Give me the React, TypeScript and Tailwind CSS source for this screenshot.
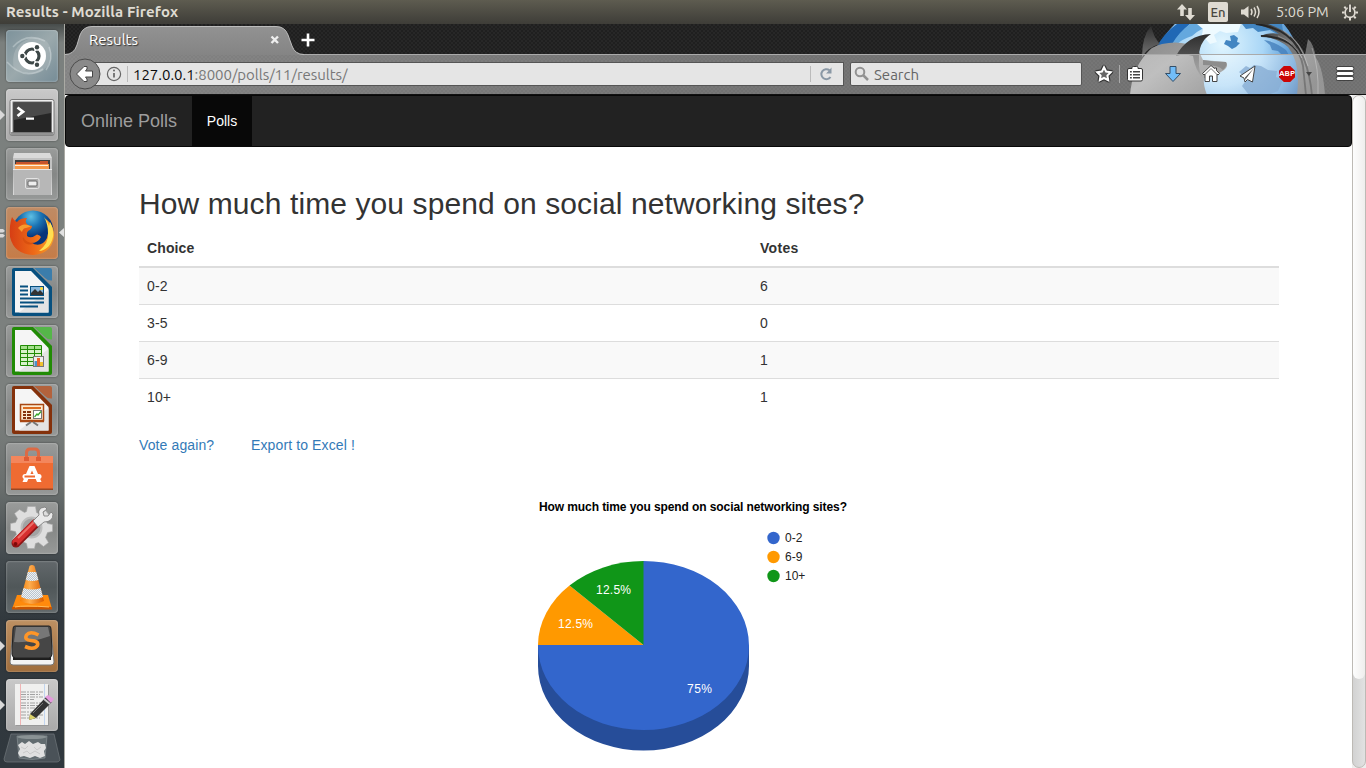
import React from "react";

const UI = "font-['Ubuntu','Noto_Sans',sans-serif]";

const Tile = ({ tone, children, mark, active }: { tone: string; children: React.ReactNode; mark?: "one" | "two"; active?: boolean }) => (
  <div className="flex h-[52px] w-[65px] shrink-0 items-center">
    <svg className="h-[52px] w-[6px] shrink-0" viewBox="0 0 6 52">
      {mark === "one" && <path d="M0 21 L5 26 L0 31Z" fill="#d9d9d9" />}
      {mark === "two" && <path d="M0 22 H3 L5 24 L3 25.500 H0Z M0 27 H3 L5 28.500 L3 30.500 H0Z" fill="#d9d9d9" />}
    </svg>
    <div className={`h-[52px] w-[52px] shrink-0 overflow-hidden rounded-[4px] shadow-[0_0_2px_rgba(0,0,0,0.5),inset_0_0_2px_rgba(255,255,255,0.5)] ${tone}`}>
      <svg className="block h-[52px] w-[52px]" viewBox="0 0 52 52">{children}</svg>
    </div>
    <svg className="h-[52px] w-[7px] shrink-0" viewBox="0 0 7 52">
      {active && <path d="M6.500 20.500 L1 25.500 L6.500 30.500Z" fill="#e2e2e2" />}
    </svg>
  </div>
);

const GREY = "bg-linear-to-b from-[#9a9c9b] via-[#858786] to-[#979998]";
const DARK = "bg-linear-to-b from-[#62686b] via-[#505759] to-[#62696b]";
const LIGHT = "bg-linear-to-b from-[#c9c9c9] to-[#a9a9a9]";

const DocPage = ({ dark, light, children }: { dark: string; light: string; children: React.ReactNode }) => (
  <>
    <path d="M6 4 Q6 2 8 2 H27 L46 21 V48 Q46 50 44 50 H8 Q6 50 6 48Z" fill={dark} />
    <path d="M9 5 H25 L42.500 23 V46.500 H9Z" fill="#f5f5f5" />
    <path d="M13 46.500 L42.500 24 V46.500Z" fill="#e4e4e4" />
    <path d="M28 2 H44 Q46 2 46 4 V14.500 Q42 15 39 12Z" fill={light} />
    {children}
  </>
);

function Launcher() {
  return (
    <aside className="flex h-[744px] w-[65px] shrink-0 flex-col overflow-hidden border-r border-[#aaaaa4] bg-[linear-gradient(#474c4b,#7b807e_2.5%,#7c807e_52%,#6a6f6e_62%,#42494d_72%,#32393e_80%,#30383e)] pt-[6px]">
      <div className="flex flex-col gap-[7px]">
        <Tile tone="bg-linear-to-br from-[#7d929b] via-[#9ba9ac] to-[#768c97]">
          <path d="M8 40 Q3 15 25 8 Q48 6 45 30 Q36 49 17 42" fill="#b9c4c6" opacity=".4" />
          <path d="M1 32 Q18 51 37 39 M7 17 Q20 2 39 11 M43 17 Q48 29 40 40" fill="none" stroke="#d5dddf" strokeOpacity=".45" strokeWidth="1.500" />
          <circle cx="26" cy="26" r="14" fill="#fff" />
          <circle cx="26" cy="26" r="7" fill="none" stroke="#3d4747" strokeWidth="3.200" />
          <path d="M26 26 H13 M26 26 L32.500 14.700 M26 26 L32.500 37.300" stroke="#fff" strokeWidth="1.500" />
          <circle cx="26" cy="26" r="5" fill="#fff" />
          <circle cx="16.500" cy="26" r="3.300" fill="#fff" /><circle cx="31" cy="17.400" r="3.300" fill="#fff" /><circle cx="31" cy="34.600" r="3.300" fill="#fff" />
          <circle cx="16.300" cy="26" r="2.200" fill="#3d4747" /><circle cx="31" cy="17.300" r="2.200" fill="#3d4747" /><circle cx="31" cy="34.700" r="2.200" fill="#3d4747" />
        </Tile>
        <Tile tone={LIGHT} mark="one">
          <rect x="4" y="10.500" width="44" height="36" rx="2" fill="#efefef" stroke="#777" />
          <rect x="4.500" y="43" width="43" height="3.500" fill="#929292" />
          <rect x="7" y="13" width="38.500" height="30.500" fill="#262626" stroke="#777" />
          <path d="M8 14 H45 V24 L8 31Z" fill="#4a4a4a" />
          <path d="M11.500 18.500 L17 22.700 L11.500 27" fill="none" stroke="#fff" strokeWidth="2.800" />
          <path d="M20 29.700 H28" stroke="#fff" strokeWidth="2.200" />
        </Tile>
        <Tile tone={GREY}>
          <path d="M8 5 H44 L46 10 V47 H7 V10Z" fill="#dadada" />
          <path d="M7 10 H46 V24 H7Z" fill="#c2c2c2" />
          <rect x="9" y="12" width="35" height="12" fill="#3d3d3d" />
          <path d="M10 14 H34 V13 H42 V24 H10Z" fill="#c6532b" />
          <path d="M9 16 H43 V24 H9Z" fill="#f59a4b" /><path d="M9 17.500 H42" stroke="#ffeedd" strokeWidth="1.200" />
          <path d="M7 21 H46 L45 47 H8Z" fill="#b7b7b7" /><path d="M7 21.500 H46" stroke="#e8e8e8" />
          <rect x="19.500" y="30.500" width="13.500" height="10" rx="1.500" fill="#aaa" stroke="#e4e4e4" />
          <rect x="22" y="33" width="9" height="5" rx="1" fill="#eee" stroke="#666" />
        </Tile>
        <Tile tone="bg-linear-to-b from-[#bf8b64] to-[#c57c48]" mark="two" active>
          <defs>
            <linearGradient id="fox" x1="0" x2="1"><stop stopColor="#d63e14" /><stop offset=".55" stopColor="#ee6a17" /><stop offset="1" stopColor="#f9a32a" /></linearGradient>
            <radialGradient id="globe" cx=".45" cy=".15"><stop stopColor="#5fc0e4" /><stop offset=".5" stopColor="#1b74b4" /><stop offset="1" stopColor="#07357a" /></radialGradient>
          </defs>
          <circle cx="27" cy="24" r="20.500" fill="url(#globe)" />
          <path d="M6 10 Q8 14 11 15 Q14 11 21 11 Q18 15 22 18 L26 19 Q26 22 22 24 Q20 26 21 29 Q25 32 31 27.500 Q34 28 35 30 Q32 36 25 36 Q36 41 41 31 Q44 22 40 12 Q49 19 48 30 Q45 47 27 48 Q8 47 4 30 Q3 18 6 10Z" fill="url(#fox)" />
          <path d="M38 10 Q42 14 43 19 L44 15 Q51 28 43 39 Q38 44 33 44 Q43 36 42 26 Q42 17 38 10Z" fill="#ffdf51" />
          <path d="M12 21 Q16 16 22 18 L25 19.500 L20 21 Q17 21 16 25Z" fill="#f79a2d" />
          <path d="M17 30 Q20 36 28 36 Q24 39 19 36 Q16 33 17 30Z" fill="#d9500f" />
        </Tile>
        <Tile tone={GREY}>
          <DocPage dark="#07507f" light="#3b7dab">
            <path d="M14 20.500 H22 M14 24.500 H22 M14 28.500 H22 M14 32.500 H38 M14 36.500 H38 M14 40.500 H32" stroke="#07507f" strokeWidth="2" />
            <rect x="24.500" y="20.500" width="13" height="9" fill="#8ab8dc" stroke="#07507f" />
            <path d="M25 29 V27 L29 23 L32 26 L34 24 L37 27 V29Z" fill="#333" /><circle cx="35.500" cy="22.500" r="1.500" fill="#ffdc32" />
          </DocPage>
        </Tile>
        <Tile tone={GREY}>
          <DocPage dark="#218b05" light="#55b649">
            <path d="M14.500 20.500 H35.500 V40.500 H14.500Z" fill="#d8f2ca" stroke="#218b05" />
            <path d="M15 22.500 H35" stroke="#a5df8c" strokeWidth="3" />
            <path d="M14.500 24.500 H35.500 M14.500 28.500 H35.500 M14.500 32.500 H35.500 M14.500 36.500 H35.500 M21.500 20.500 V40.500 M28.500 20.500 V40.500" stroke="#218b05" />
            <rect x="27.500" y="31.500" width="10" height="10" fill="#eee" stroke="#777" />
            <path d="M28.500 41 V36 H31 V41" fill="#4b91ca" /><path d="M31 41 V33 H34 V41" fill="#ed642b" /><path d="M34 41 V37 H37 V41" fill="#efc230" />
          </DocPage>
        </Tile>
        <Tile tone={GREY}>
          <DocPage dark="#84310b" light="#b3623c">
            <rect x="14.500" y="20.500" width="23" height="16" fill="#fce9cf" stroke="#a84713" strokeWidth="1.500" />
            <path d="M17 24 H35" stroke="#db6c21" strokeWidth="2" />
            <path d="M17 28 H25 M17 31 H25 M17 34 H25" stroke="#84310b" strokeWidth="1.800" strokeDasharray="3 1 5 9" />
            <rect x="27.500" y="26.500" width="8" height="8" fill="#fff" stroke="#777" /><path d="M28.500 33 L31 30 L32 31 L35 27.500" fill="none" stroke="#37a72a" strokeWidth="1.200" />
            <path d="M14 37.500 H38" stroke="#a84713" strokeWidth="1.500" /><path d="M25 38 L20 41.500 M27 38 L32 41.500" stroke="#777" strokeWidth="2" />
          </DocPage>
        </Tile>
        <Tile tone={GREY}>
          <path d="M5 13 H47 V46 H5Z" fill="#ef6b32" /><path d="M5 13 H47 V20 H5Z" fill="#f3865c" /><path d="M5 45.500 H47 V47 H5Z" fill="#9a4825" />
          <path d="M20.500 17 V10 Q20.500 6 24 6 H29 Q32.500 6 32.500 10 V17" fill="none" stroke="#dc6a45" strokeWidth="3" />
          <path d="M18 16 H23 M30 16 H35" stroke="#df5b34" strokeWidth="4" />
          <path d="M23.500 23 H28.500 L35.500 39 H31 L26 27.500 L21 39 H16.500Z" fill="#fff" /><rect x="16.500" y="31" width="19" height="5" rx="2.500" fill="#fff" /><path d="M18.500 33.500 H29" stroke="#ef6b32" strokeWidth="2" />
        </Tile>
        <Tile tone={GREY}>
          <g transform="translate(25.5 25.500)">
            <path d="M-4 -21 H4 L5 -15 L9 -13 L14 -17 L18 -12 L14 -7 L16 -4 L21 -3 V4 L16 5 L14 10 L17 15 L12 19 L7 15 L4 16 L3 21 H-4 L-5 16 L-9 14 L-14 18 L-19 12 L-15 7 L-16 4 L-21 3 V-4 L-16 -5 L-14 -9 L-17 -14 L-12 -18 L-7 -15 L-5 -16Z" fill="#dedede" stroke="#aaa" strokeWidth=".600" />
            <circle r="10" fill="#a2a3a3" stroke="#bdbdbd" strokeWidth="2" />
          </g>
          <path d="M10 41 L29 22" stroke="#8e1515" strokeWidth="9" strokeLinecap="round" /><path d="M10 40 L29 21" stroke="#d62e2e" strokeWidth="7" strokeLinecap="round" /><path d="M12 36 L28 20" stroke="#ed6f68" strokeWidth="2" />
          <path d="M27 19 L33 13 Q31 6 39 5 L41 7 L37 10 L38 14 L42 14 L45 10 L47 12 Q47 20 38 20 L32 25Z" fill="#e9e9e9" stroke="#777" strokeWidth=".800" />
          <circle cx="9.500" cy="42" r="2" fill="#7e0808" />
        </Tile>
        <Tile tone={DARK}>
          <defs>
            <linearGradient id="cone"><stop stopColor="#f47e05" /><stop offset=".4" stopColor="#ffad4d" /><stop offset="1" stopColor="#d85c00" /></linearGradient>
            <pattern id="mesh" width="2" height="2" patternUnits="userSpaceOnUse"><path d="M0 0H2V2H0Z" fill="#eef1f4" /><path d="M0 0H1V1H0ZM1 1H2V2H1Z" fill="#b9c4ce" /></pattern>
          </defs>
          <path d="M11 34 H42 L46 48 H6Z" fill="#ff8a0c" /><path d="M6 46 H46 V48.500 H6Z" fill="#c95500" />
          <path d="M23.500 5 Q26 3 28.500 5 L38 40 Q26 46 14 40Z" fill="url(#cone)" />
          <path d="M21.800 11 H30.200 L32.500 19 Q26 21 19.700 19Z M17.500 27 Q26 30 34.700 27 L37 36 Q26 41 15 36Z" fill="url(#mesh)" />
          <path d="M9 46 Q18 44 43 46" fill="none" stroke="#ffbd5b" />
        </Tile>
        <Tile tone="bg-linear-to-b from-[#bd9062] to-[#9f6d3c]" mark="one">
          <path d="M7 10 H45 L48 42 Q48 45 45 45 H7 Q4 45 4 42Z" fill="#f3f3f3" stroke="#777" />
          <path d="M7 35 H45 V40 H7Z" fill="#1d1d1d" />
          <path d="M9 6 H43 Q45 6 45 9 L46 34 Q46 37 43 38 H9 Q6 37 6 34 L7 9 Q7 6 9 6Z" fill="#464646" stroke="#222" />
          <path d="M10 7 H42 L44 16 Q25 23 8 22Z" fill="#8b8b8b" opacity=".7" />
          <path d="M32.500 15 Q24 10.500 20.500 15 Q18 20 25 20.500 Q33 21 31.500 25.500 Q28 30.500 19 26.500" fill="none" stroke="#ff9628" strokeWidth="3.600" />
        </Tile>
        <Tile tone={LIGHT} mark="one">
          <rect x="10" y="6" width="33" height="41" fill="#999" /><rect x="9" y="5" width="33" height="41" fill="#f0f0ef" />
          <path d="M14.500 5 V46" stroke="#f0b4b4" /><path d="M38.500 5 V46" stroke="#c2d5ef" />
          <path d="M15 13 H37 M15 15.500 H34 M15 18 H37 M15 20.500 H28 M15 24 H37 M15 26.500 H32 M15 29 H36 M15 33 H31 M15 36 H37 M15 39 H34" stroke="#999" strokeWidth=".900" strokeDasharray="5 1 2 1" />
          <path d="M24 35 L40 18 L46 23 L30 39 L23 41Z" fill="#343434" /><path d="M24 35 L30 39 L23 41Z" fill="#dbd26b" /><path d="M39 18 L42 16 L48 20 L45 24Z" fill="#e39adc" /><path d="M38 20 L44 25" stroke="#c9c9c9" strokeWidth="2" /><path d="M27 34 L37 24" stroke="#777" />
        </Tile>
      </div>
      <svg className="mt-[2px] h-[36px] w-[64px] shrink-0" viewBox="0 0 64 36">
        <path d="M11 1 H54 L60 27 Q59 29 57 29 H7 Q4 29 4 26Z" fill="#4a5258" stroke="#70777b" strokeWidth=".700" />
        <path d="M17 3 H47 L45 25 Q32 28 19 25Z" fill="#626c70" stroke="#8f979a" strokeWidth=".600" />
        <ellipse cx="32" cy="4" rx="14.500" ry="2" fill="#8a9294" />
        <path d="M18 12 L22 9 L25 11 L29 8 L33 11 L38 9 L41 11 L45 11 L46 15 L44 18 L45 23 L40 25 L35 23 L30 25 L24 23 L20 24 L18 20 L20 16Z" fill="#e0e0e0" />
        <path d="M21 14 L25 16 L28 13 M34 14 L37 17 L41 14 M23 20 L27 18 L30 21 L35 18 L40 21" fill="none" stroke="#c9c9c9" />
      </svg>
    </aside>
  );
}

function Persona() {
  return (
    <svg className="absolute top-0 right-0 h-[71px] w-[250px]" viewBox="1116 24 250 71">
      <defs>
        <radialGradient id="earth" gradientUnits="userSpaceOnUse" cx="1222" cy="44" r="92"><stop stopColor="#e2f6ff" /><stop offset=".45" stopColor="#a9d6f6" /><stop offset=".8" stopColor="#4f92d0" /><stop offset="1" stopColor="#1f5fa6" /></radialGradient>
        <linearGradient id="fur" x2="1" y2=".7"><stop stopColor="#8a8a8a" /><stop offset=".45" stopColor="#9a9a9a" /><stop offset="1" stopColor="#6e6e6e" /></linearGradient>
        <linearGradient id="ear" x2="0" y2="1"><stop stopColor="#2e2e2e" /><stop offset="1" stopColor="#747474" /></linearGradient>
        <linearGradient id="mane" x2="1" y2=".6"><stop stopColor="#262626" /><stop offset=".5" stopColor="#7d7d7d" /><stop offset="1" stopColor="#5a5a5a" /></linearGradient>
      </defs>
      <path d="M1150 95 Q1150 56 1160 44 Q1167 31 1177 22 H1282 Q1304 45 1305 95Z" fill="url(#earth)" />
      <path d="M1177 24 H1190 Q1178 34 1172 46 L1156 48 Q1164 33 1177 24Z" fill="#2068b5" />
      <path d="M1190 24 H1216 Q1200 28 1192 36 Q1182 39 1176 45 L1172 44 Q1179 32 1190 24Z" fill="#64a8de" />
      <path d="M1197 24 L1203 29 L1202 35 L1210 44 L1217 42 L1214 35 L1220 31 L1226 33 L1238 32 L1241 24Z" fill="#eefaff" />
      <path d="M1224 44 L1226 40 L1231 41 L1230 36 L1234 35 L1238 38 L1237 42 L1240 43 L1236 47 L1232 49 L1228 46Z M1242 24 L1246 29 L1253 28 L1258 32 L1270 30 L1284 38 L1282 24Z" fill="#4386c2" />
      <path d="M1264 40 Q1276 42 1286 50 L1289 55 L1282 55 L1278 51 L1272 50 L1270 45Z M1239 72 L1246 66 L1250 68 L1254 65 L1261 66 L1268 70 L1277 71 L1276 77 L1283 80 L1278 91 L1268 95 L1249 95 L1242 86 L1247 79Z" fill="#457fbb" opacity=".8" />
      <path d="M1130 95 Q1132 70 1146 54 Q1152 46 1162 44 Q1176 41 1187 44 L1199 52 L1203 60 L1226 62 Q1229 66 1224 70 Q1216 76 1204 78 Q1203 85 1207 95Z" fill="url(#fur)" />
      <path d="M1142 57 Q1142 36 1151 26 Q1154 38 1160 44 Q1148 47 1142 57Z" fill="url(#ear)" />
      <path d="M1176 56 Q1187 35 1211 34 Q1198 42 1199 60 Q1198 70 1203 78 Q1195 70 1193 56 Q1184 53 1176 56Z" fill="url(#ear)" />
      <path d="M1203 60 Q1214 62 1226 62 Q1228 65 1223 70 Q1219 65 1203 65Z" fill="#4c4c4c" />
      <path d="M1254 24 H1268 Q1296 33 1305 55 L1308 39 Q1314 44 1316 58 Q1323 68 1325 95 H1297 Q1301 63 1288 47 Q1278 38 1260 36 Q1270 32 1279 34 Q1270 27 1254 24Z" fill="url(#mane)" />
      <path d="M1256 24 Q1286 28 1298 48 M1261 36 Q1298 37 1303 66 L1306 95 M1290 37 Q1308 55 1312 95" fill="none" stroke="#202020" strokeWidth="1.800" opacity=".85" />
      <path d="M1278 36 Q1294 42 1302 58 M1284 31 Q1301 42 1308 66 M1312 48 Q1319 68 1318 95" fill="none" stroke="#ababab" opacity=".6" />
    </svg>
  );
}

function Toolbar() {
  return (
    <div className="relative flex h-[40px] items-center border-b border-[#111] bg-linear-to-r from-white/45 via-white/37 to-white/36 pb-[1px]">
      <div className="flex h-[24px] flex-1 items-center pl-[4px]">
        <svg className="relative z-10 h-[32px] w-[32px] shrink-0" viewBox="0 0 32 32">
          <circle cx="16" cy="16" r="15" fill="#8a8a8a" stroke="#4c4c4c" />
          <path d="M7.500 16 L15 8.500 H18 V11 L16.500 13 H23.500 V19 H16.500 L18 21 V23.500 H15Z" fill="#fff" stroke="#454545" />
        </svg>
        <div className="-ml-[9px] flex h-[24px] w-[752px] shrink-0 items-center border border-[#555] bg-[#e5e5e5] pl-[13px]">
          <svg className="h-[16px] w-[16px] shrink-0" viewBox="0 0 16 16"><circle cx="8" cy="8" r="6.600" fill="none" stroke="#666" strokeWidth="1.200" /><path d="M8 7 V11.500" stroke="#666" strokeWidth="1.700" /><circle cx="8" cy="4.600" r="1" fill="#666" /></svg>
          <div className="ml-[5px] h-[16px] w-px bg-[#bbb]" />
          <span className={`ml-[5px] flex-1 pt-[1px] text-[15px] leading-[20px] tracking-[-0.03px] whitespace-nowrap text-[#777] ${UI}`}><span className="text-[#0a0a0a]">127.0.0.1</span>:8000/polls/11/results/</span>
          <div className="h-[16px] w-px bg-[#bbb]" />
          <svg className="mr-[9px] ml-[7px] h-[16px] w-[16px]" viewBox="0 0 16 16"><path d="M12.500 11 A5 5 0 1 1 11.500 4.300" fill="none" stroke="#8a98a5" strokeWidth="2" /><path d="M13.500 1.500 V7.500 H8 L10.500 5Z" fill="#8a98a5" /></svg>
        </div>
        <div className="ml-[6px] flex h-[24px] w-[232px] shrink-0 items-center rounded-[2px] border border-[#555] bg-[#e5e5e5]">
          <svg className="ml-[3px] h-[16px] w-[16px]" viewBox="0 0 16 16"><circle cx="6" cy="6" r="4.300" fill="none" stroke="#929292" strokeWidth="2" /><path d="M9 9 L14 14" stroke="#929292" strokeWidth="2.500" /></svg>
          <span className={`ml-[4px] pt-[1px] text-[15px] leading-[20px] text-[#666] ${UI}`}>Search</span>
        </div>
        <div className="flex flex-1 items-center">
          <svg className="ml-[12px] h-[20px] w-[20px]" viewBox="0 0 20 20"><path d="M10 2.800 L12.200 7.300 L17.200 8 L13.600 11.500 L14.400 16.500 L10 14.200 L5.600 16.500 L6.400 11.500 L2.800 8 L7.800 7.300Z" fill="none" stroke="#333" strokeWidth="4" strokeLinejoin="round" /><path d="M10 3.200 L12.100 7.500 L16.800 8.200 L13.400 11.500 L14.200 16.200 L10 14 L5.800 16.200 L6.600 11.500 L3.200 8.200 L7.900 7.500Z" fill="#666" stroke="#fff" strokeWidth="2" /></svg>
          <div className="ml-[5px] h-[18px] w-px bg-[#aaa]" />
          <svg className="ml-[5px] h-[20px] w-[20px]" viewBox="0 0 20 20"><path d="M7 4.500 V3.500 Q7 2.500 8.500 2.500 H11.500 Q13 2.500 13 3.500 V4.500 H16 Q17.500 4.500 17.500 6 V15.500 Q17.500 17 16 17 H4 Q2.500 17 2.500 15.500 V6 Q2.500 4.500 4 4.500Z" fill="#fff" stroke="#333" /><path d="M5 7 H6.800 V8.500 H5Z M8 7 H15 V8.500 H8Z M5 10 H6.800 V11.500 H5Z M8 10 H15 V11.500 H8Z M5 13 H6.800 V14.500 H5Z M8 13 H15 V14.500 H8Z" fill="#444" /></svg>
          <svg className="ml-[18px] h-[20px] w-[20px]" viewBox="0 0 20 20"><path d="M7 2.500 H13 V9.500 H17.500 L10 17.500 L2.500 9.500 H7Z" fill="#72bdf8" stroke="#344f68" strokeLinejoin="round" /></svg>
          <svg className="ml-[18px] h-[20px] w-[20px]" viewBox="0 0 20 20"><path d="M4 10 V17.500 H8.500 V12 H11.500 V17.500 H16 V10 L17 11 L18.500 9.500 L15.500 6.500 V4 H13.500 V4.500 L10 1.500 L1.500 9.500 L3 11Z" fill="#fff" stroke="#444" /><path d="M4.500 10 L10 4.500 L15.500 10" fill="none" stroke="#777" /></svg>
          <svg className="ml-[17px] h-[20px] w-[20px]" viewBox="0 0 20 20"><path d="M17 2 L2 12 L6 14 L7 18 L9.500 15.500 L14.500 18Z" fill="#fff" stroke="#444" strokeLinejoin="round" /><path d="M16 4 L7 13.500 L7.500 16 L8.500 14Z" fill="#555" /></svg>
          <div className="ml-[21px] flex h-[16px] w-[16px] items-center justify-center bg-[#cb0606] [clip-path:polygon(30%_0,70%_0,100%_30%,100%_70%,70%_100%,30%_100%,0_70%,0_30%)]"><span className="font-['Ubuntu','Liberation_Sans',sans-serif] text-[8px] leading-[16px] font-bold text-white">ABP</span></div>
          <svg className="ml-[10px] h-[6px] w-[8px]" viewBox="0 0 8 6"><path d="M1 1 H7 L4 5Z" fill="#444" /></svg>
          <svg className="ml-[22px] h-[20px] w-[20px]" viewBox="0 0 20 20"><path d="M3 4.500 H17 M3 9.500 H17 M3 14.500 H17" stroke="#333" strokeWidth="4.600" strokeLinecap="round" /><path d="M3 4.500 H17 M3 9.500 H17 M3 14.500 H17" stroke="#fff" strokeWidth="3" strokeLinecap="round" /></svg>
        </div>
      </div>
    </div>
  );
}

const rows = [["0-2", "6"], ["3-5", "0"], ["6-9", "1"], ["10+", "1"]];
const legend = [["0-2", "#3366cc"], ["6-9", "#ff9900"], ["10+", "#109618"]];

function PieChart() {
  return (
    <svg className="ml-[361px] block h-[313px] w-[400px] font-['Liberation_Sans',Arial,sans-serif] text-[12px] tracking-normal" viewBox="500 455 400 313">
      <text x="539" y="511" fontWeight="bold" textLength="308">How much time you spend on social networking sites?</text>
      {legend.map(([label, color], i) => (
        <g key={label}><circle cx="773.500" cy={538 + i * 19} r="6.200" fill={color} /><text x="785" y={542 + i * 19} fill="#222">{label}</text></g>
      ))}
      <path d="M538 645 V666 A105.500 84.500 0 0 0 749 666 V645Z" fill="#264d99" />
      <path d="M643 645 V561 A105.500 84.500 0 1 1 538 645Z" fill="#3366cc" />
      <path d="M643.500 645 H538 A105.500 84.500 0 0 1 569.500 585.500Z" fill="#ff9900" />
      <path d="M643.500 645 L569.500 585.500 A105.500 84.500 0 0 1 643.500 561Z" fill="#109618" />
      <g fill="#fff"><text x="596" y="594" textLength="35">12.5%</text><text x="558" y="628" textLength="35">12.5%</text><text x="687" y="693" textLength="25">75%</text></g>
    </svg>
  );
}

export default function App() {
  return (
    <div className="flex h-[768px] w-[1366px] flex-col overflow-hidden bg-white">
      <header className={`flex h-[24px] shrink-0 items-center bg-linear-to-b from-[#5e5c50] to-[#3e3d38] pl-[6px] text-[#dfdbd2] ${UI}`}>
        <span className="flex-1 text-[15px] leading-[24px] font-bold tracking-[0.12px] whitespace-nowrap">Results - Mozilla Firefox</span>
        <svg className="h-[20px] w-[20px]" viewBox="0 0 20 20"><path d="M6 2 L11 7.500 H7.800 V14 H4.200 V7.500 H1Z M14 18.500 L9 13 H12.200 V6 H15.800 V13 H19Z" fill="#dfdbd2" /></svg>
        <div className="ml-[12px] flex h-[20px] w-[20px] items-center justify-center rounded-[2px] bg-[#dfdbd2] text-[13px] leading-[20px] font-medium text-[#484640]">En</div>
        <svg className="ml-[12px] h-[20px] w-[22px]" viewBox="0 0 22 20"><path d="M1 7.500 H4 L8.500 4 V16 L4 12.500 H1Z" fill="#dfdbd2" /><path d="M11 7 Q13 10 11 13 M14 5.500 Q17 10 14 14.500 M17 4 Q21 10 17 16" fill="none" stroke="#dfdbd2" strokeWidth="1.500" /></svg>
        <span className="ml-[14px] w-[54px] text-[14.500px] leading-[24px] whitespace-nowrap">5:06 PM</span>
        <svg className="mr-[7px] ml-[11px] h-[18px] w-[18px]" viewBox="0 0 18 18">
          <circle cx="9" cy="9.500" r="4.900" fill="none" stroke="#dfdbd2" strokeWidth="1.700" />
          <path d="M9 15 V17.500 M3.500 9.500 H1 M14.500 9.500 H17 M5 13.500 L3.300 15.200 M13 13.500 L14.700 15.200 M5 5.500 L3.300 3.800 M13 5.500 L14.700 3.800" stroke="#dfdbd2" strokeWidth="2" />
          <path d="M9 1 V8" stroke="#4d4b44" strokeWidth="4.500" /><path d="M9 1.500 V9" stroke="#dfdbd2" strokeWidth="1.900" />
        </svg>
      </header>
      <div className="flex h-[744px]">
        <Launcher />
        <main className="flex w-[1301px] flex-col">
          <div className="relative h-[71px] shrink-0 bg-[#232323] bg-[repeating-conic-gradient(#1f1f1f_0_25%,#272727_0_50%)] bg-size-[4px_4px]">
            <Persona />
            <div className={`relative flex h-[31px] border-b border-[#aaa] text-white ${UI}`}>
              <svg className="absolute top-0 left-0 h-[31px] w-[242px]" viewBox="0 0 242 31">
                <defs><linearGradient id="tab" x2="0" y2="1"><stop stopColor="#929292" /><stop offset="1" stopColor="#848484" /></linearGradient></defs>
                <path d="M0 30.500 Q9 30.500 12 21 L15 11 Q18 2 27 2.500 H211 Q220 2 223 11 L227 22 Q230 30.500 239 30.500 V31 H0Z" fill="url(#tab)" />
                <path d="M0 30.500 Q9 30.500 12 21 L15 11 Q18 2.500 27 2.500 H211 Q220 2.500 223 11 L227 22 Q230 30.500 239 30.500" fill="none" stroke="#bcbcbc" />
              </svg>
              <span className="relative ml-[24px] w-[181px] pt-[1px] text-[15px] leading-[29px] [text-shadow:1px_1px_1px_#333]">Results</span>
              <svg className="relative mt-[11px] h-[10px] w-[10px]" viewBox="0 0 10 10"><path d="M1.500 1.500 L8 8 M8 1.500 L1.500 8" stroke="#eee" strokeWidth="2.400" /></svg>
              <svg className="relative mt-[9px] ml-[21px] h-[14px] w-[14px]" viewBox="0 0 14 14"><path d="M7 0.500 V13.500 M0.500 7 H13.500" stroke="#fff" strokeWidth="2.600" /></svg>
            </div>
            <Toolbar />
          </div>
          <div className="flex h-[673px] bg-white font-['Liberation_Sans',Arial,sans-serif] text-[14px] leading-[20px] text-[#333]">
            <div className="w-[1287px] overflow-hidden">
              <nav className="flex h-[52px] rounded-[4px] border border-[#080808] bg-[#222]">
                <a className="w-[126px] pl-[15px] text-[18px] leading-[50px] whitespace-nowrap text-[#9d9d9d]">Online Polls</a>
                <a className="w-[60px] bg-[#080808] text-center leading-[50px] text-white">Polls</a>
              </nav>
              <section className="ml-[74px] w-[1140px] pt-[40px] tracking-[0.12px]">
                <h2 className="mb-[10px] text-[30px] leading-[33px] tracking-[0.1px] whitespace-nowrap">How much time you spend on social networking sites?</h2>
                <div className="flex h-[38px] border-b-2 border-[#ddd] font-bold"><div className="w-[613px] p-[8px]">Choice</div><div className="p-[8px] tracking-[0.3px]">Votes</div></div>
                {rows.map(([choice, votes], i) => (
                  <div key={choice} className={`flex ${i ? "h-[37px] border-t border-[#ddd]" : "h-[36px]"} ${i % 2 ? "" : "bg-[#f9f9f9]"}`}><div className="w-[613px] p-[8px]">{choice}</div><div className="p-[8px]">{votes}</div></div>
                ))}
                <div className="mt-[20px] flex h-[20px] text-[#337ab7]"><a className="w-[112px]">Vote again?</a><a>Export to Excel !</a></div>
                <PieChart />
              </section>
            </div>
            <div className="w-[14px] bg-[#eee]"><div className="h-full rounded-[7px] border border-[#bdbab5] bg-linear-to-r from-[#d2d2d2] to-[#e2e2e2]"><div className="h-[583px] rounded-[6px] bg-linear-to-r from-[#fdfdfd] to-[#efeeed]" /></div></div>
          </div>
        </main>
      </div>
    </div>
  );
}
